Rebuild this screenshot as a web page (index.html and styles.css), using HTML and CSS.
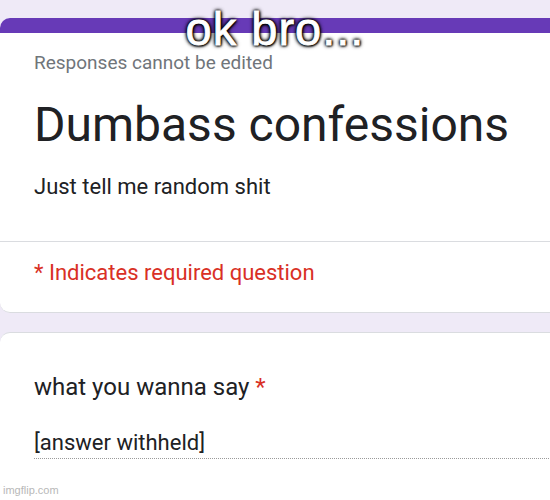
FILE: index.html
```html
<!DOCTYPE html>
<html lang="en">
<head>
    <meta charset="UTF-8">
    <title>Dumbass confessions</title>
    <link rel="stylesheet" href="styles.css">
</head>
<body>
    <div class="page">
        <div class="card header-card">
            <div class="header-bar"></div>
            <div class="header-body">
                <div class="note">Responses cannot be edited</div>
                <h1 class="title">Dumbass confessions</h1>
                <div class="desc">Just tell me random shit</div>
            </div>
            <div class="required-row">* Indicates required question</div>
        </div>

        <div class="card question-card">
            <div class="question">what you wanna say <span class="star">*</span></div>
            <div class="answer">[answer withheld]</div>
        </div>
    </div>

    <div class="caption">ok bro...</div>
    <div class="watermark">imgflip.com</div>
</body>
</html>
```

FILE: styles.css
```css
body {
    margin: 0;
    background-color: #efeaf7;
    font-family: Roboto, 'Liberation Sans', sans-serif;
    color: #202124;
    overflow: hidden;
    height: 500px;
}

.page {
    padding-top: 18px;
    width: 570px;
    display: flex;
    flex-direction: column;
    gap: 19px;
}

.card {
    background-color: white;
    border: 1px solid #dadce0;
    border-left: none;
    border-radius: 10px;
    overflow: hidden;
}

.header-card {
    border-top: none;
}

.header-bar {
    height: 15px;
    background-color: #673ab7;
}

.header-body {
    padding: 18px 34px 40px;
}

.note {
    font-size: 19px;
    color: #70757a;
    line-height: 24px;
}

.title {
    margin: 22px 0 0;
    font-size: 48px;
    font-weight: 400;
    line-height: 56px;
}

.desc {
    margin-top: 20px;
    font-size: 22px;
    line-height: 28px;
}

.required-row {
    border-top: 1px solid #dadce0;
    padding: 17px 34px 25px;
    font-size: 22px;
    line-height: 28px;
    color: #d93025;
}

.question-card {
    padding: 39px 0 200px 34px;
}

.question {
    font-size: 24px;
    line-height: 30px;
}

.star {
    color: #d93025;
}

.answer {
    margin-top: 27px;
    font-size: 22px;
    line-height: 28px;
    padding-bottom: 1px;
    border-bottom: 1px dotted #9a9a9a;
}

.caption {
    position: absolute;
    top: 5px;
    left: 0;
    right: 0;
    text-align: center;
    font-family: 'Liberation Sans', sans-serif;
    font-size: 47px;
    line-height: 47px;
    letter-spacing: 1px;
    color: white;
    -webkit-text-stroke: 0.8px white;
    text-shadow: 0 0 3px #000, 0 0 3px #000, 0 0 4px #000, 0 0 5px #000, 1px 1px 2px #000;
}

.watermark {
    position: absolute;
    left: 3px;
    top: 484px;
    font-family: 'Liberation Sans', sans-serif;
    font-size: 11px;
    line-height: 13px;
    color: #b8b8b8;
}
```
